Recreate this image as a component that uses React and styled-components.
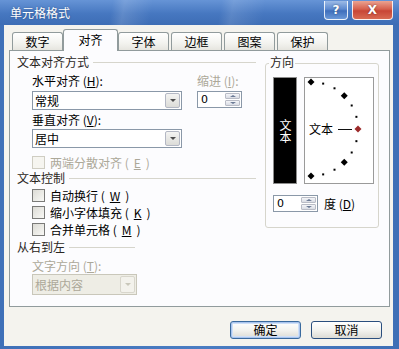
import React from 'react';
import styled, { createGlobalStyle, css } from 'styled-components';

const GlobalStyle = createGlobalStyle`
  html, body {
    margin: 0;
    padding: 0;
    background: #ffffff;
  }

  body {
    font-family: "Noto Sans CJK SC", "DejaVu Sans", sans-serif;
    font-size: 12px;
    color: #000000;
  }

  u {
    text-underline-offset: 1px;
  }
`;

const Window = styled.div`
  width: 399px;
  height: 349px;
  display: flex;
  flex-direction: column;
  background: linear-gradient(90deg, #3f70b8, #4a7cc2 50%, #3e6fb6);
  overflow: hidden;
`;

const TitleBar = styled.div`
  height: 25px;
  flex: none;
  display: flex;
  align-items: flex-start;
  padding: 1px 6px 0 10px;
  box-sizing: border-box;
  background:
    linear-gradient(100deg, transparent 28%, rgba(255, 255, 255, 0.14) 31%, transparent 38%),
    linear-gradient(100deg, transparent 55%, rgba(255, 255, 255, 0.12) 58%, transparent 66%),
    linear-gradient(#6694d6, #4677c0 55%, #3d6db5);
`;

const Title = styled.span`
  margin-top: 6px;
  color: #ffffff;
  line-height: 12px;
  text-shadow: 0 0 2px rgba(0, 0, 0, 0.35);
  flex: 1;
`;

const CaptionButton = styled.div`
  height: 19px;
  box-sizing: border-box;
  border: 1px solid rgba(255, 255, 255, 0.85);
  border-top: none;
  border-radius: 0 0 4px 4px;
  display: flex;
  align-items: center;
  justify-content: center;
  color: #ffffff;
  font-family: "DejaVu Sans", sans-serif;
  font-weight: bold;
  font-size: 12px;
  text-shadow: 0 0 2px rgba(0, 0, 0, 0.5);
  ${({ $kind }) =>
    $kind === 'close'
      ? css`
          width: 41px;
          background: linear-gradient(#eba391, #d6604d 45%, #c84636 55%, #d86a52);
        `
      : css`
          width: 24px;
          margin-right: 4px;
          background: linear-gradient(#9dbbe6, #5d8ad0 45%, #3f6fbc 55%, #6a98d8);
        `}
`;

const Client = styled.div`
  flex: 1;
  margin: 0 6px 3px 4px;
  background: #f4f3ee;
  display: flex;
  flex-direction: column;
  padding-top: 4px;
`;

const TabStrip = styled.div`
  height: 21px;
  display: flex;
  align-items: flex-end;
  gap: 2px;
  padding-left: 8px;
  position: relative;
  z-index: 1;
`;

const Tab = styled.div`
  box-sizing: border-box;
  width: 51px;
  height: 18px;
  border: 1px solid #919b9c;
  border-bottom: none;
  border-radius: 3px 3px 0 0;
  background: linear-gradient(#ffffff, #f3f3ef 60%, #e6e5df);
  display: flex;
  align-items: center;
  justify-content: center;
  line-height: 12px;
  ${({ $active }) =>
    $active &&
    css`
      width: 55px;
      height: 22px;
      margin: 0 -2px -1px;
      background: #fcfcfe;
      padding-bottom: 2px;
    `}
`;

const Panel = styled.div`
  margin-left: 5px;
  width: 381px;
  height: 257px;
  box-sizing: border-box;
  border: 1px solid #919b9c;
  background: #fcfcfe;
  display: flex;
  gap: 8px;
  padding: 5px 0 0 7px;
`;

const LeftColumn = styled.div`
  width: 240px;
  display: flex;
  flex-direction: column;
`;

const GroupHeader = styled.div`
  display: flex;
  align-items: center;
  height: 12px;
  line-height: 12px;
  color: #2a2622;
  white-space: nowrap;
  width: ${({ $width }) => $width || 239}px;
  margin-top: ${({ $top }) => $top || 0}px;

  &::after {
    content: '';
    flex: 1;
    height: 1px;
    margin-left: 4px;
    background: #d6d5cc;
  }
`;

const Label = styled.div`
  height: 12px;
  line-height: 12px;
  white-space: nowrap;
  color: ${({ $disabled }) => ($disabled ? '#aca899' : '#000000')};
  margin-top: ${({ $top }) => $top || 0}px;
`;

const AlignBlock = styled.div`
  display: flex;
  gap: 15px;
  margin: 7px 0 0 15px;
`;

const FieldColumn = styled.div`
  width: ${({ $width }) => $width}px;
  margin-left: ${({ $indent }) => $indent || 0}px;
  display: flex;
  flex-direction: column;
`;

const Select = styled.div`
  box-sizing: border-box;
  width: ${({ $width }) => $width || 150}px;
  height: ${({ $height }) => $height || 19}px;
  margin-top: ${({ $top }) => $top || 0}px;
  border: 1px solid ${({ $disabled }) => ($disabled ? '#c9c7ba' : '#8a98a8')};
  background: ${({ $disabled }) => ($disabled ? '#eeede5' : '#ffffff')};
  color: ${({ $disabled }) => ($disabled ? '#aca899' : '#000000')};
  display: flex;
  align-items: center;
  padding: 0 1px 0 2px;
  line-height: 12px;
`;

const DropButton = styled.div`
  margin-left: auto;
  width: 15px;
  height: ${({ $size }) => $size || 15}px;
  box-sizing: border-box;
  border: 1px solid ${({ $disabled }) => ($disabled ? '#d8d6cc' : '#b4b8c4')};
  border-radius: 2px;
  background: ${({ $disabled }) =>
    $disabled ? '#f3f2ec' : 'linear-gradient(#f4f4f2, #dcdcd8)'};
  display: flex;
  align-items: center;
  justify-content: center;

  &::before {
    content: '';
    border-left: 3px solid transparent;
    border-right: 3px solid transparent;
    border-top: 3px solid ${({ $disabled }) => ($disabled ? '#c9c7ba' : '#4d4d4d')};
  }
`;

const Spinner = styled.div`
  box-sizing: border-box;
  width: 45px;
  height: 17px;
  margin-top: ${({ $top }) => $top || 0}px;
  border: 1px solid #8a98a8;
  background: #ffffff;
  display: flex;
  align-items: center;
  padding: 0 1px 0 3px;
  line-height: 12px;
  font-family: "DejaVu Sans", sans-serif;
  font-size: 11px;
`;

const SpinButtons = styled.div`
  margin-left: auto;
  width: 15px;
  height: 13px;
  display: flex;
  flex-direction: column;
  gap: 1px;
`;

const SpinHalf = styled.div`
  flex: 1;
  box-sizing: border-box;
  border: 1px solid #b9bcc6;
  border-radius: 1px;
  background: linear-gradient(#f4f5f8, #d9dce4);
  display: flex;
  align-items: center;
  justify-content: center;

  &::before {
    content: '';
    border-left: 3px solid transparent;
    border-right: 3px solid transparent;
    ${({ $down }) =>
      $down
        ? css`border-top: 2px solid #6a7a95;`
        : css`border-bottom: 2px solid #6a7a95;`}
  }
`;

const CheckRow = styled.div`
  display: flex;
  align-items: center;
  gap: 5px;
  height: 13px;
  line-height: 12px;
  margin: ${({ $top }) => $top || 0}px 0 0 15px;
  color: ${({ $disabled }) => ($disabled ? '#aca899' : '#000000')};
  white-space: nowrap;
`;

const CheckBox = styled.span`
  width: 13px;
  height: 13px;
  box-sizing: border-box;
  flex: none;
  border: 1px solid ${({ $disabled }) => ($disabled ? '#cfcdc2' : '#7a7a78')};
  background: ${({ $disabled }) =>
    $disabled ? '#f6f5f0' : 'linear-gradient(135deg, #dcdbd5, #f8f8f5)'};
`;

const RightColumn = styled.div`
  width: 114px;
  display: flex;
  flex-direction: column;
`;

const GroupBox = styled.div`
  margin-top: 7px;
  height: 165px;
  box-sizing: border-box;
  border: 1px solid #d6d5cc;
  border-radius: 3px;
  display: flex;
  flex-direction: column;
`;

const Legend = styled.div`
  align-self: flex-start;
  margin: -8px 0 0 3px;
  padding: 0 1px;
  line-height: 12px;
  background: #fcfcfe;
  color: #2a2622;
`;

const OrientRow = styled.div`
  display: flex;
  gap: 7px;
  margin: 9px 0 0 7px;
`;

const VerticalText = styled.div`
  width: 24px;
  height: 107px;
  box-sizing: border-box;
  border: 1px solid #8c8c8c;
  background: #000000;
  color: #ffffff;
  display: flex;
  align-items: center;
  justify-content: center;
`;

const VerticalLabel = styled.span`
  writing-mode: vertical-rl;
  text-orientation: upright;
  line-height: 12px;
  font-size: 12px;
`;

const Dial = styled.div`
  width: 70px;
  height: 107px;
  box-sizing: border-box;
  border: 1px solid #9a9a9a;
  background: #ffffff;
  position: relative;
`;

const DialLabel = styled.span`
  position: absolute;
  left: 4px;
  top: 45px;
  line-height: 12px;
  white-space: nowrap;
`;

const DegreeRow = styled.div`
  display: flex;
  align-items: center;
  gap: 6px;
  margin: 11px 0 0 7px;
  line-height: 12px;
`;

const ButtonBar = styled.div`
  display: flex;
  justify-content: flex-end;
  gap: 10px;
  margin-top: 14px;
  padding-right: 11px;
`;

const Button = styled.div`
  width: 71px;
  height: 18px;
  box-sizing: border-box;
  border: 1px solid #2b4f7e;
  border-radius: 3px;
  background: linear-gradient(#ffffff, #f3f3ef 50%, #dcdbd5);
  display: flex;
  align-items: center;
  justify-content: center;
  line-height: 12px;
  ${({ $default }) =>
    $default &&
    css`
      border-color: #3a6a9e;
      box-shadow: inset 0 0 0 1px #a9c4ee, inset 0 0 0 2px #cfe0f7;
    `}
`;

const tabs = ['数字', '对齐', '字体', '边框', '图案', '保护'];

const cx = 6;
const cy = 51;
const radius = 47;

const dialMarks = [90, 75, 60, 45, 30, 15, 0, -15, -30, -45, -60, -75, -90].map((deg) => {
  const rad = (deg * Math.PI) / 180;
  return {
    deg,
    x: cx + radius * Math.cos(rad),
    y: cy - radius * Math.sin(rad),
    big: deg % 45 === 0,
  };
});

const Diamond = ({ x, y, color }) => (
  <polygon
    points={`${x},${y - 3.5} ${x + 3.5},${y} ${x},${y + 3.5} ${x - 3.5},${y}`}
    fill={color}
  />
);

const DialDrawing = () => (
  <svg width="68" height="105" style={{ display: 'block' }}>
    {dialMarks.map((m) =>
      m.big ? (
        <Diamond key={m.deg} x={m.x} y={m.y} color={m.deg === 0 ? '#9c2a2a' : '#000000'} />
      ) : (
        <rect key={m.deg} x={m.x - 1} y={m.y - 1} width="2" height="2" fill="#000000" />
      )
    )}
    <line x1="33" y1="51.5" x2="47" y2="51.5" stroke="#111111" strokeWidth="1" />
  </svg>
);

const SpinBox = ({ top }) => (
  <Spinner $top={top}>
    0
    <SpinButtons>
      <SpinHalf />
      <SpinHalf $down />
    </SpinButtons>
  </Spinner>
);

const App = () => (
  <>
    <GlobalStyle />
    <Window>
      <TitleBar>
        <Title>单元格格式</Title>
        <CaptionButton>?</CaptionButton>
        <CaptionButton $kind="close">X</CaptionButton>
      </TitleBar>

      <Client>
        <TabStrip>
          {tabs.map((t) => (
            <Tab key={t} $active={t === '对齐'}>
              {t}
            </Tab>
          ))}
        </TabStrip>

        <Panel>
          <LeftColumn>
            <GroupHeader>文本对齐方式</GroupHeader>
            <AlignBlock>
              <FieldColumn $width={150}>
                <Label>
                  水平对齐 (<u>H</u>):
                </Label>
                <Select $top={4}>
                  常规
                  <DropButton />
                </Select>
                <Label $top={4}>
                  垂直对齐 (<u>V</u>):
                </Label>
                <Select $top={3}>
                  居中
                  <DropButton />
                </Select>
              </FieldColumn>
              <FieldColumn $width={45}>
                <Label $disabled>
                  缩进 (<u>I</u>):
                </Label>
                <SpinBox top={4} />
              </FieldColumn>
            </AlignBlock>
            <CheckRow $top={8} $disabled>
              <CheckBox $disabled />
              两端分散对齐 (<u>E</u>)
            </CheckRow>

            <GroupHeader $top={3}>文本控制</GroupHeader>
            <CheckRow $top={5}>
              <CheckBox />
              自动换行 (<u>W</u>)
            </CheckRow>
            <CheckRow $top={4}>
              <CheckBox />
              缩小字体填充 (<u>K</u>)
            </CheckRow>
            <CheckRow $top={4}>
              <CheckBox />
              合并单元格 (<u>M</u>)
            </CheckRow>

            <GroupHeader $top={5} $width={118}>
              从右到左
            </GroupHeader>
            <FieldColumn $width={120} $indent={15}>
              <Label $top={7} $disabled>
                文字方向 (<u>T</u>):
              </Label>
              <Select $top={2} $width={105} $height={21} $disabled>
                根据内容
                <DropButton $disabled $size={17} />
              </Select>
            </FieldColumn>
          </LeftColumn>

          <RightColumn>
            <GroupBox>
              <Legend>方向</Legend>
              <OrientRow>
                <VerticalText>
                  <VerticalLabel>文本</VerticalLabel>
                </VerticalText>
                <Dial>
                  <DialDrawing />
                  <DialLabel>文本</DialLabel>
                </Dial>
              </OrientRow>
              <DegreeRow>
                <SpinBox />
                <span>
                  度 (<u>D</u>)
                </span>
              </DegreeRow>
            </GroupBox>
          </RightColumn>
        </Panel>

        <ButtonBar>
          <Button $default>确定</Button>
          <Button>取消</Button>
        </ButtonBar>
      </Client>
    </Window>
  </>
);

export default App;
